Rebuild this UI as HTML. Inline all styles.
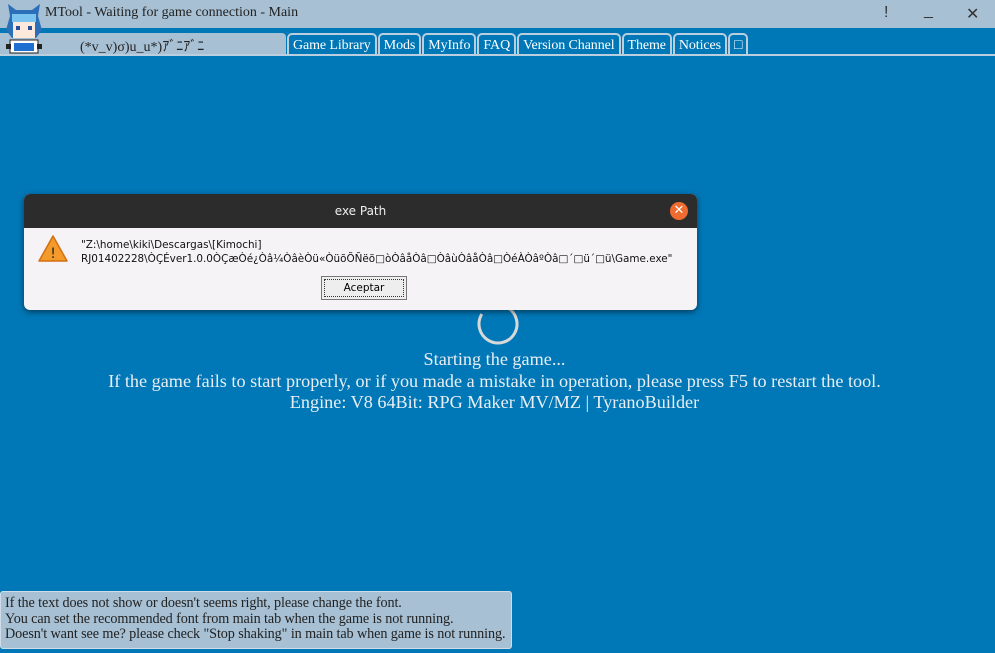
<!DOCTYPE html>
<html><head><meta charset="utf-8"><style>
*{margin:0;padding:0;box-sizing:border-box}
body{width:995px;height:653px;background:#0077b6;position:relative;overflow:hidden;font-family:"Liberation Serif",serif}
.title{position:absolute;left:0;top:0;width:995px;height:28px;background:#a7c0d4;color:#222;font-size:14px}
.title span{position:absolute;left:45px;top:5px}
.ctl{position:absolute;top:4px;font-family:"Liberation Sans",sans-serif;font-size:16px;color:#333}
.lefttab{position:absolute;left:0;top:33px;width:286px;height:23px;background:#a7c0d4;border-top-right-radius:4px;font-size:14px;color:#222}
.tabs{position:absolute;left:287px;top:33px;display:flex;gap:1px}
.tab{height:23px;border:2px solid #b9cfe0;border-bottom:none;border-radius:5px 5px 0 0;color:#fff;font-size:14px;padding:0 4px;line-height:21px;letter-spacing:-.1px}
.line{position:absolute;left:0;top:54px;width:995px;height:2px;background:#b9cfe0}
.avatar{position:absolute;left:4px;top:2px;width:40px;height:54px}
.center{position:absolute;left:-3px;width:995px;text-align:center;color:#e8eef4;font-size:18.2px}
.note{position:absolute;left:0;top:591px;width:512px;height:58px;background:#a7c0d4;border:1px solid #d0dde8;border-radius:3px;font-size:14.2px;color:#222;padding:4px 4px;line-height:15.5px;white-space:nowrap;letter-spacing:-.1px}
.dlg{position:absolute;left:24px;top:194px;width:673px;height:116px;background:#f5f3f5;border-radius:6px;overflow:hidden;box-shadow:0 2px 6px rgba(0,0,0,.5)}
.dh{height:34px;background:#2c2c2c;color:#eee;font-family:"DejaVu Sans",sans-serif;font-size:12px;text-align:center;line-height:34px}
.x{position:absolute;left:646px;top:8px;width:18px;height:18px;border-radius:50%;background:#f06b2f;color:#fff;font-size:13px;line-height:18px;text-align:center;font-family:"DejaVu Sans",sans-serif}
.msg{position:absolute;left:57px;top:44px;font-family:"DejaVu Sans",sans-serif;font-size:10.4px;color:#111;line-height:14px;white-space:nowrap}
.btn{position:absolute;left:297px;top:82px;width:86px;height:24px;border:1px solid #777;background:#eee;font-family:"DejaVu Sans",sans-serif;font-size:10.5px;text-align:center;line-height:22px}
.btn i{position:absolute;left:2px;top:2px;right:2px;bottom:2px;border:1px dotted #333}
</style></head><body>
<div class="title"><span>MTool - Waiting for game connection - Main</span>
<div class="ctl" style="left:884px">!</div><div class="ctl" style="left:924px;top:2px">_</div><div class="ctl" style="left:966px">✕</div></div>
<div class="lefttab"><span style="position:absolute;left:80px;top:3px">(*v_v)σ)u_u*)ｱﾞﾆｱﾞﾆ</span></div>
<div class="line"></div>
<div class="tabs">
<div class="tab">Game Library</div><div class="tab">Mods</div><div class="tab">MyInfo</div><div class="tab">FAQ</div><div class="tab">Version Channel</div><div class="tab">Theme</div><div class="tab">Notices</div><div class="tab">□</div>
</div>
<svg class="avatar" viewBox="0 0 40 54">
<path d="M4 2 L12 8 L28 8 L36 2 L34 14 L38 28 L32 36 L8 36 L2 28 L6 14Z" fill="#2a6fb8"/>
<rect x="9" y="18" width="22" height="18" fill="#fde8dc"/>
<rect x="8" y="12" width="24" height="8" fill="#7cc4f0"/>
<rect x="12" y="24" width="4" height="4" fill="#2a4f9a"/><rect x="24" y="24" width="4" height="4" fill="#2a4f9a"/>
<rect x="6" y="38" width="28" height="13" fill="#fff" stroke="#222"/>
<rect x="10" y="41" width="20" height="8" fill="#1e6fd0"/>
<rect x="2" y="42" width="5" height="5" fill="#222"/><rect x="33" y="42" width="5" height="5" fill="#222"/>
</svg>
<svg style="position:absolute;left:476px;top:303px" width="46" height="44"><circle cx="22" cy="21" r="19" fill="none" stroke="#d8d8d8" stroke-width="3" stroke-dasharray="90 30" transform="rotate(-60 22 21)"/></svg>
<div class="center" style="top:349px">Starting the game...</div>
<div class="center" style="top:371px">If the game fails to start properly, or if you made a mistake in operation, please press F5 to restart the tool.</div>
<div class="center" style="top:392px">Engine: V8 64Bit: RPG Maker MV/MZ | TyranoBuilder</div>
<div class="note">If the text does not show or doesn't seems right, please change the font.<br>You can set the recommended font from main tab when the game is not running.<br>Doesn't want see me? please check "Stop shaking" in main tab when game is not running.</div>
<div class="dlg"><div class="dh">exe Path</div><div class="x">✕</div>
<svg style="position:absolute;left:13px;top:40px" width="32" height="30"><path d="M16 2 L30 27 L2 27Z" fill="#f39a2b" stroke="#d26f10" stroke-width="1.5" stroke-linejoin="round"/><text x="16" y="24" font-size="14" text-anchor="middle" fill="#222" font-family="DejaVu Sans">!</text></svg>
<div class="msg">"Z:\home\kiki\Descargas\[Kimochi]<br>RJ01402228\ÒÇÉver1.0.0ÒÇæÒé¿Òâ¼ÒâèÒü«ÒüõÕÑëõ□òÒâåÒâ□ÒâùÒâåÒâ□ÒéÀÒâºÒâ□´□ü´□ü\Game.exe"</div>
<div class="btn"><i></i>Aceptar</div></div>
</body></html>
